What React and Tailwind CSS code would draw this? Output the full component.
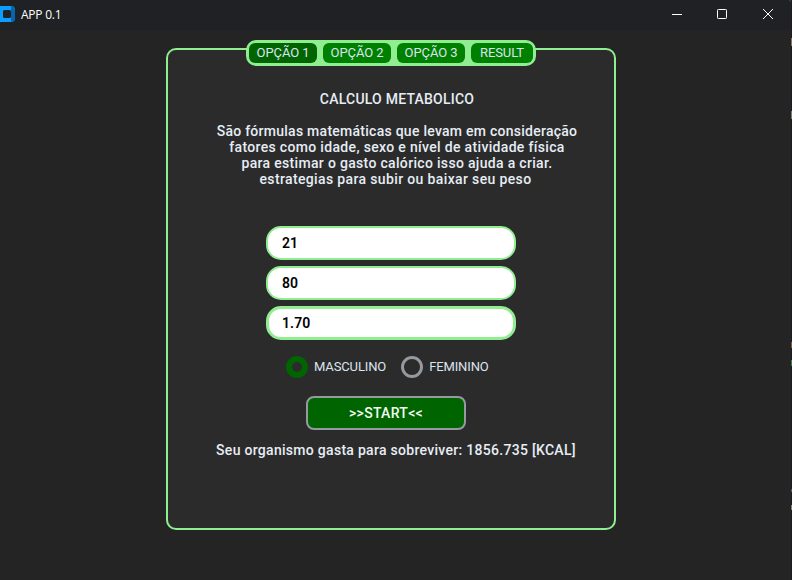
import React from "react";

const tabs = [
  { label: "OPÇÃO 1", look: "bg-[#006400] w-[68px]" },
  { label: "OPÇÃO 2", look: "bg-[#008000] w-[68px]" },
  { label: "OPÇÃO 3", look: "bg-[#008000] w-[68px]" },
  { label: "RESULT", look: "bg-[#008000] w-[62px]" },
];

const lines = [
  { text: "São fórmulas matemáticas que levam em consideração", look: "tracking-[0.26px]" },
  { text: "fatores como idade, sexo e nível de atividade física", look: "tracking-[0.33px]" },
  { text: "para estimar o gasto calórico isso ajuda a criar.", look: "tracking-[0.32px]" },
  { text: "estrategias para subir ou baixar seu peso", look: "pr-[3px] tracking-[0.36px]" },
];

const fields = [
  { value: "21", look: "border-2 pl-[14px] tracking-[0px]" },
  { value: "80", look: "border-2 pl-[14px] tracking-[0.1px]" },
  { value: "1.70", look: "border-[3px] pl-[13px] tracking-[0.1px]" },
];

function TitleBar() {
  return (
    <header className="flex h-[30px] shrink-0 items-center bg-[#202124] pb-[2px] text-white">
      <svg className="h-4 w-[15px] shrink-0" viewBox="0 0 15 16">
        <path d="M0 0H11Q15 0 15 4V12Q15 16 11 16H0Z" fill="#0b9dff" />
        <path d="M11 0.2Q15 0.5 15 4V12Q15 15.5 11 15.8V12V4Z" fill="#0863ad" />
        <rect x="3" y="4" width="8" height="8" rx="1.5" fill="#202124" />
      </svg>
      <span className="ml-[6px] mt-[2px] font-['Open_Sans',sans-serif] text-[12px] leading-4 tracking-[-0.25px]">APP 0.1</span>
      <svg className="ml-auto mr-[18px] h-[10px] w-[102px]" viewBox="0 0 102 10" fill="none" stroke="#fff">
        <path d="M0 5.5H10" />
        <rect x="45.5" y="0.5" width="9" height="9" rx="0.8" />
        <path d="M91 0L101 10M101 0L91 10" />
      </svg>
    </header>
  );
}

function Radio({ label, checked }) {
  return (
    <label className="flex items-center gap-[6px]">
      <span
        className={
          checked
            ? "h-[22px] w-[22px] rounded-full border-[6px] border-[#006400]"
            : "h-[22px] w-[22px] rounded-full border-[3px] border-[#949a9f]"
        }
      />
      <span className="text-[13px] leading-4 tracking-[-0.13px] text-[#dce4ee]">{label}</span>
    </label>
  );
}

/* Slivers of the window behind, showing past the right edge. */
function EdgeSpecks() {
  return (
    <svg className="pointer-events-none absolute right-0 top-0 h-[580px] w-1" viewBox="0 0 4 580">
      <path d="M0 0Q3 1 3 4V0Z" fill="#3a3b40" />
      <rect x="3" y="0" width="1" height="580" fill="#1c1c1f" />
      <rect x="3" y="38" width="1" height="8" fill="#8a7560" />
      <rect x="3" y="111" width="1" height="8" fill="#71836f" />
      <rect x="3" y="342" width="1" height="6" fill="#7a5c42" />
      <rect x="3" y="360" width="1" height="6" fill="#3c7a45" />
      <rect x="3" y="489" width="1" height="3" fill="#555" />
      <rect x="3" y="505" width="1" height="5" fill="#85817b" />
    </svg>
  );
}

export default function App() {
  return (
    <div className="relative flex h-[580px] w-[792px] flex-col overflow-hidden bg-[#242424] font-['Roboto',sans-serif]">
      <TitleBar />
      <main className="ml-[166px] mt-[18px] flex h-[482px] w-[450px] flex-col rounded-[10px] border-2 border-[#90ee90] bg-[#2b2b2b]">
        <nav className="-mt-[10px] ml-[78px] flex h-[26px] w-[290px] shrink-0 items-center gap-[6px] rounded-[10px] bg-[#90ee90] pl-[3px]">
          {tabs.map((tab) => (
            <button key={tab.label} className={`h-5 shrink-0 whitespace-nowrap rounded-[6px] text-center text-[13px] leading-5 tracking-[-0.1px] text-[#dce4ee] ${tab.look}`}>
              {tab.label}
            </button>
          ))}
        </nav>

        <section className="ml-[9px] mt-[25px] flex w-[440px] flex-col items-center whitespace-nowrap text-[14px] font-medium leading-4 text-[#e6edf5]">
          <h1 className="tracking-[0.22px]">CALCULO METABOLICO</h1>
          <div className="mt-4 flex flex-col items-center">
            {lines.map((line) => (
              <p key={line.text} className={line.look}>{line.text}</p>
            ))}
          </div>
        </section>

        <form className="ml-[98px] mt-[39px] flex w-[250px] flex-col gap-[6px]">
          {fields.map((field) => (
            <div key={field.value} className={`flex h-[34px] items-center rounded-[15px] border-[#90ee90] bg-white text-[14px] font-semibold text-black ${field.look}`}>
              {field.value}
            </div>
          ))}
        </form>

        <div className="ml-[118px] mt-4 flex gap-[15px]">
          <Radio label="MASCULINO" checked />
          <Radio label="FEMININO" />
        </div>

        <button className="ml-[138px] mt-[18px] h-[34px] w-40 shrink-0 rounded-[8px] border-2 border-[#949a9f] bg-[#006400] text-[14px] font-medium leading-4 tracking-[0.3px] text-[#f0fff0]">
          &gt;&gt;START&lt;&lt;
        </button>
        <p className="ml-[8px] mt-3 w-[440px] whitespace-nowrap text-center text-[14px] font-medium leading-4 tracking-[0.29px] text-[#e6edf5]">
          Seu organismo gasta para sobreviver: 1856.735 [KCAL]
        </p>
      </main>
      <EdgeSpecks />
    </div>
  );
}
